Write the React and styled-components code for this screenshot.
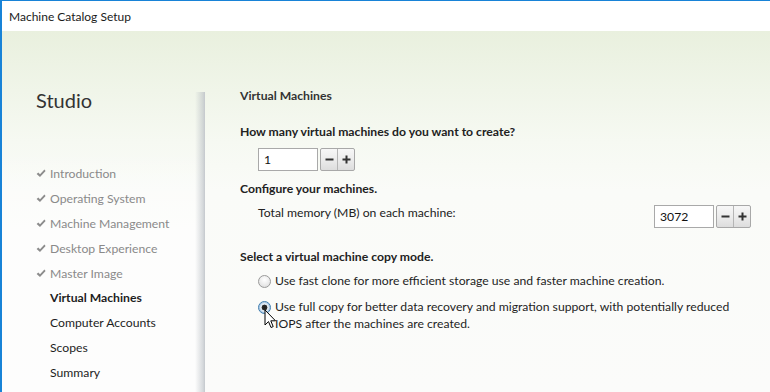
import React from "react";
import styled, { createGlobalStyle } from "styled-components";

const GlobalStyle = createGlobalStyle`
  html, body {
    margin: 0;
    padding: 0;
    background: #ffffff;
  }
  body {
    font-family: Lato, "Noto Sans", "Liberation Sans", sans-serif;
  }
`;

const Window = styled.div`
  width: 770px;
  height: 392px;
  box-sizing: border-box;
  border-top: 1px solid #1883d7;
  border-left: 2px solid #1883d7;
  display: flex;
  flex-direction: column;
  overflow: hidden;
  position: relative;
`;

const TitleBar = styled.div`
  height: 30px;
  display: flex;
  align-items: center;
  padding-left: 7px;
  background: #ffffff;
  font-size: 12px;
  color: #1a1a1a;
`;

const Body = styled.div`
  flex: 1;
  display: grid;
  grid-template-columns: 203px 1fr;
  background: linear-gradient(
    180deg,
    #e9f0de 0px,
    #f0f5e9 60px,
    #f6f9f2 110px,
    #fafbf8 160px,
    #fbfbfa 100%
  );
`;

const Sidebar = styled.div`
  position: relative;
  padding: 57px 0 0 34px;
  background: linear-gradient(180deg, transparent 0px, transparent 120px, rgba(255, 255, 255, 0.6) 200px);

  &::after {
    content: "";
    position: absolute;
    right: 0;
    top: 61px;
    bottom: 0;
    width: 10px;
    background: linear-gradient(90deg, rgba(190, 195, 200, 0) 0%, rgba(180, 186, 192, 0.55) 80%, #c4c8cd 100%);
  }
`;

const Brand = styled.div`
  font-size: 20px;
  line-height: 24px;
  color: #333333;
  margin-bottom: 49px;
`;

const NavList = styled.ul`
  list-style: none;
  margin: 0;
  padding: 0;
`;

const NavItem = styled.li`
  position: relative;
  height: 24.9px;
  display: flex;
  align-items: center;
  font-size: 12.2px;
  font-weight: ${(p) => (p.$active ? 700 : 400)};
  color: ${(p) => (p.$done ? "#8a8a8a" : "#1e1e1e")};
  padding-left: ${(p) => (p.$done ? 0 : 14)}px;

  svg {
    margin-right: 4px;
  }

  &::after {
    content: ${(p) => (p.$active ? '""' : "none")};
    position: absolute;
    right: 0;
    top: 50%;
    margin-top: -6px;
    border-style: solid;
    border-width: 6px 5px 6px 0;
    border-color: transparent #ffffff transparent transparent;
  }
`;

const Content = styled.div`
  padding: 57px 19px 0 35px;
  font-size: 12.2px;
  color: #222222;
`;

const Heading = styled.div`
  font-weight: 700;
  line-height: 16px;
  color: #333333;
`;

const Question = styled.div`
  font-weight: 700;
  line-height: 16px;
  color: #222222;
  margin-top: ${(p) => p.$gap}px;
`;

const Indented = styled.div`
  padding-left: 18px;
  margin-top: ${(p) => p.$gap}px;
`;

const Row = styled.div`
  display: flex;
  align-items: flex-start;
  justify-content: space-between;
`;

const Label = styled.div`
  line-height: 16px;
`;

const Spinner = styled.div`
  display: flex;
  align-items: stretch;
  gap: 2px;
  height: 23px;
`;

const NumberBox = styled.div`
  width: 60px;
  box-sizing: border-box;
  border: 1px solid #a9a9a9;
  background: #ffffff;
  display: flex;
  align-items: center;
  padding-left: 5px;
  font-size: 12.2px;
  color: #111111;
`;

const StepGroup = styled.div`
  display: flex;
  border: 1px solid #a8a8a8;
  border-radius: 2px;
  overflow: hidden;
  background: linear-gradient(180deg, #f7f7f7 0%, #ececec 50%, #dddddd 100%);
`;

const StepButton = styled.div`
  width: 16px;
  display: flex;
  align-items: center;
  justify-content: center;
  & + & {
    border-left: 1px solid #b5b5b5;
  }
`;

const RadioList = styled.div`
  padding-left: 18px;
  margin-top: 8px;
  display: flex;
  flex-direction: column;
  gap: 9.5px;
`;

const RadioRow = styled.label`
  display: flex;
  align-items: flex-start;
  gap: 4px;
  line-height: 16.5px;
  color: #1e1e1e;
`;

const RadioDot = styled.span`
  flex: 0 0 auto;
  width: 13px;
  height: 13px;
  margin-top: 2px;
  box-sizing: border-box;
  border-radius: 50%;
  border: 1px solid ${(p) => (p.$checked ? "#3d7bad" : "#9a9a9a")};
  background: ${(p) =>
    p.$checked
      ? "radial-gradient(circle, #1f1f1f 0, #2a2a2a 2.6px, #dfe9f3 3.2px, #eef3f8 100%)"
      : "radial-gradient(circle at 50% 35%, #ffffff 0, #ededed 50%, #d7d7d7 100%)"};
  box-shadow: ${(p) => (p.$checked ? "inset 0 0 0 1px #a9c8e6" : "none")};
`;

const Cursor = styled.svg`
  position: absolute;
  left: 262px;
  top: 308px;
`;

const Check = () => (
  <svg width="10" height="9" viewBox="0 0 10 9">
    <path d="M0.6 5 L2.3 3.5 L4 5.3 L8.4 0.6 L9.6 1.9 L4 8 Z" fill="#8c8c8c" />
  </svg>
);

const Minus = () => (
  <svg width="9" height="9" viewBox="0 0 9 9">
    <rect x="0.5" y="3.5" width="8" height="2" fill="#333" />
  </svg>
);

const Plus = () => (
  <svg width="9" height="9" viewBox="0 0 9 9">
    <rect x="0.5" y="3.5" width="8" height="2" fill="#333" />
    <rect x="3.5" y="0.5" width="2" height="8" fill="#333" />
  </svg>
);

const steps = [
  { name: "Introduction", done: true },
  { name: "Operating System", done: true },
  { name: "Machine Management", done: true },
  { name: "Desktop Experience", done: true },
  { name: "Master Image", done: true },
  { name: "Virtual Machines", active: true },
  { name: "Computer Accounts" },
  { name: "Scopes" },
  { name: "Summary" },
];

const NumberSpinner = ({ value }) => (
  <Spinner>
    <NumberBox>{value}</NumberBox>
    <StepGroup>
      <StepButton>
        <Minus />
      </StepButton>
      <StepButton>
        <Plus />
      </StepButton>
    </StepGroup>
  </Spinner>
);

const App = () => {
  return (
    <>
      <GlobalStyle />
      <Window>
        <TitleBar>Machine Catalog Setup</TitleBar>
        <Body>
          <Sidebar>
            <Brand>Studio</Brand>
            <NavList>
              {steps.map((s) => (
                <NavItem key={s.name} $done={s.done} $active={s.active}>
                  {s.done && <Check />}
                  {s.name}
                </NavItem>
              ))}
            </NavList>
          </Sidebar>
          <Content>
            <Heading>Virtual Machines</Heading>
            <Question $gap={20}>How many virtual machines do you want to create?</Question>
            <Indented $gap={8}>
              <NumberSpinner value="1" />
            </Indented>
            <Question $gap={10}>Configure your machines.</Question>
            <Indented $gap={8}>
              <Row>
                <Label>Total memory (MB) on each machine:</Label>
                <NumberSpinner value="3072" />
              </Row>
            </Indented>
            <Question $gap={21}>Select a virtual machine copy mode.</Question>
            <RadioList>
              <RadioRow>
                <RadioDot />
                <span>Use fast clone for more efficient storage use and faster machine creation.</span>
              </RadioRow>
              <RadioRow>
                <RadioDot $checked />
                <span>
                  Use full copy for better data recovery and migration support, with potentially reduced
                  <br />
                  IOPS after the machines are created.
                </span>
              </RadioRow>
            </RadioList>
          </Content>
        </Body>
        <Cursor width="14" height="21" viewBox="0 0 14 21">
          <path
            d="M1 1 L1 16 L4.5 12.6 L7 18.5 L9.2 17.6 L6.8 11.8 L11.5 11.8 Z"
            fill="#ffffff"
            stroke="#000000"
            strokeWidth="1"
            strokeLinejoin="miter"
          />
        </Cursor>
      </Window>
    </>
  );
};

export default App;
